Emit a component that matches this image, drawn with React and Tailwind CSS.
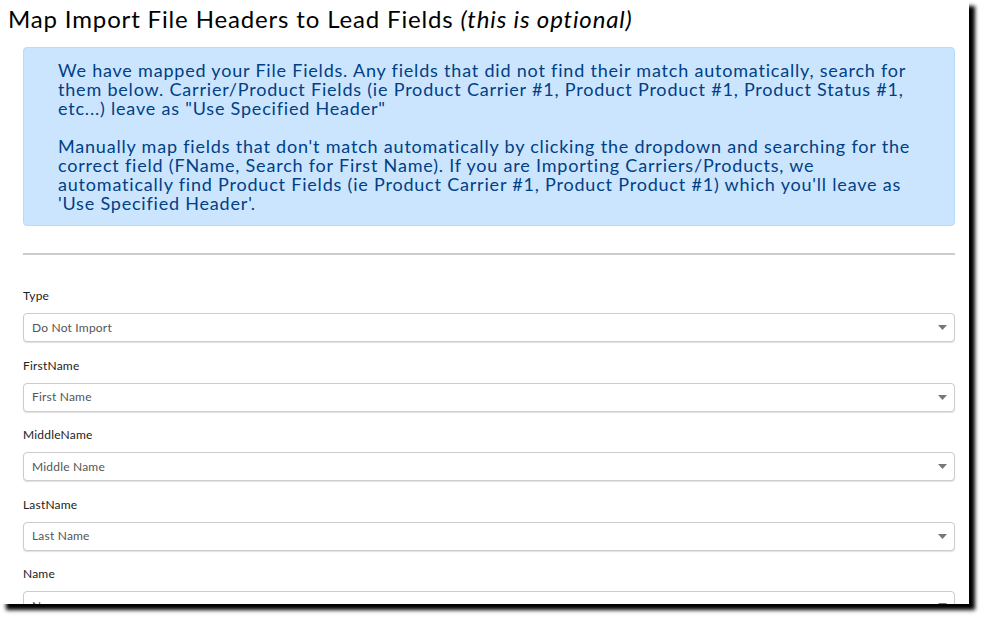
import React from "react";

const fields = [
  ["Type", "Do Not Import"],
  ["FirstName", "First Name"],
  ["MiddleName", "Middle Name"],
  ["LastName", "Last Name"],
  ["Name", "Name"],
];

function Caret() {
  return (
    <svg width="9" height="5" viewBox="0 0 9 5" className="shrink-0">
      <path d="M0 0 H9 L4.5 5 Z" fill="#777" />
    </svg>
  );
}

export default function App() {
  return (
    <div className="w-[984px] h-[621px] bg-white" style={{ fontFamily: "Lato, 'Noto Sans', sans-serif" }}>
      <div className="w-[969px] h-[604px] bg-white overflow-hidden shadow-[6px_6px_4px_#000]">
        <div className="pl-[8px] pt-[4px] h-[47px]">
          <h1 className="text-[24px] leading-[29px] tracking-[0.85px] text-black font-normal">
            Map Import File Headers to Lead Fields <i>(this is optional)</i>
          </h1>
        </div>
        <div className="pl-[23px] pr-[14px]">
          <div className="bg-[#cce5ff] border border-[#b8daff] rounded-[4px] pl-[34px] pr-[10px] pt-[13px] pb-[12px] text-[#004085] text-[18px] leading-[19px] tracking-[0.8px] whitespace-nowrap">
            We have mapped your File Fields. Any fields that did not find their match automatically, search for
            <br />
            them below. Carrier/Product Fields (ie Product Carrier #1, Product Product #1, Product Status #1,
            <br />
            etc...) leave as "Use Specified Header"
            <br />
            <br />
            Manually map fields that don't match automatically by clicking the dropdown and searching for the
            <br />
            correct field (FName, Search for First Name). If you are Importing Carriers/Products, we
            <br />
            automatically find Product Fields (ie Product Carrier #1, Product Product #1) which you'll leave as
            <br />
            'Use Specified Header'.
          </div>
          <div className="mt-[27px] h-[2px] bg-[#cbcbd0]" />
          <div className="pt-[33px] flex flex-col gap-[15.5px]">
            {fields.map(([label, value]) => (
              <div key={label} className="flex flex-col">
                <label className="text-[12px] leading-[16px] text-[#222] font-normal tracking-[0.2px] mb-[9px]">{label}</label>
                <div className="h-[29px] border border-[#ccc] rounded-[4px] shadow-[0_1px_1px_rgba(0,0,0,0.12)] flex items-center justify-between pl-[8px] pr-[7px] bg-white">
                  <span className="text-[12px] text-[#555] tracking-[0.2px]">{value}</span>
                  <Caret />
                </div>
              </div>
            ))}
          </div>
        </div>
      </div>
    </div>
  );
}
